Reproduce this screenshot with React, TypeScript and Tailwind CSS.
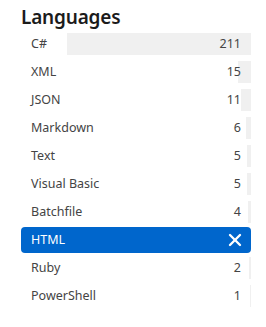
import { X } from "lucide-react";

type Lang = { name: string; count: number };

const languages: Lang[] = [
  { name: "C#", count: 211 },
  { name: "XML", count: 15 },
  { name: "JSON", count: 11 },
  { name: "Markdown", count: 6 },
  { name: "Text", count: 5 },
  { name: "Visual Basic", count: 5 },
  { name: "Batchfile", count: 4 },
  { name: "HTML", count: 3 },
  { name: "Ruby", count: 2 },
  { name: "PowerShell", count: 1 },
];

const max = 211;
const selected = "HTML";

export default function App() {
  return (
    <div className="w-[266px] h-[327px] bg-white px-[21px] pt-[5px] font-['Noto_Sans',sans-serif]">
      <h2 className="text-[19px] leading-[24px] font-semibold text-[#1b1b1b] mb-[1px] tracking-[-0.2px]">Languages</h2>

      <ul className="w-[230px]">
        {languages.map((lang) => {
          const isSelected = lang.name === selected;
          if (isSelected) {
            return (
              <li key={lang.name} className="h-[28px] py-[1px]">
                <div className="h-full flex items-center justify-between pl-[10px] pr-[6px] rounded-[4px] bg-[#0066cc] text-white text-[12.5px]">
                  <span>{lang.name}</span>
                  <X size={20} strokeWidth={2.8} />
                </div>
              </li>
            );
          }
          return (
            <li key={lang.name} className="relative h-[28px] py-[3px]">
              {/* proportional bar behind the row */}
              <div className="absolute right-0 top-[3px] bottom-[3px] flex justify-end w-[184px]">
                <div
                  className="h-full bg-[#f0f0f0]"
                  style={{ width: Math.max(1.5, (lang.count / max) * 184) }}
                />
              </div>
              <div className="relative h-full flex items-center justify-between pl-[10px] pr-[10px] text-[12.5px] text-[#444]">
                <span>{lang.name}</span>
                <span>{lang.count}</span>
              </div>
            </li>
          );
        })}
      </ul>
    </div>
  );
}
